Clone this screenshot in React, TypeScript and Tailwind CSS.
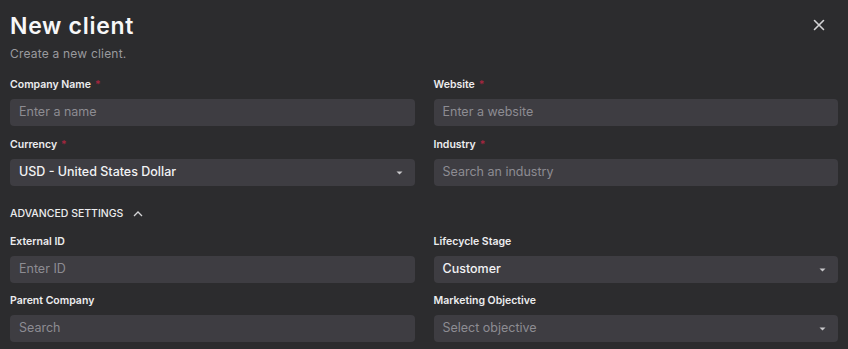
import React from "react";

const font = { fontFamily: "Inter, 'Noto Sans', sans-serif" };

function Label({ text, required }: { text: string; required?: boolean }) {
  return (
    <div className="h-[14px] text-[10.5px] leading-[14px] font-semibold text-[#ececee] flex items-center">
      <span>{text}</span>
      {required && <span className="ml-[4px] text-[#a3263f]">*</span>}
    </div>
  );
}

function Caret() {
  return (
    <svg width="7" height="4" viewBox="0 0 7 4" className="shrink-0">
      <path d="M0.5 0.5 L6.5 0.5 L3.5 3.5 Z" fill="#c9c9cc" />
    </svg>
  );
}

function Field({
  label,
  required,
  value,
  placeholder,
  select,
}: {
  label: string;
  required?: boolean;
  value?: string;
  placeholder?: string;
  select?: boolean;
}) {
  return (
    <div className="flex flex-col">
      <Label text={label} required={required} />
      <div className="mt-[7px] h-[27px] rounded-[4px] bg-[#3e3d42] flex items-center justify-between pl-[9px] pr-[12px]">
        {value ? (
          <span className="text-[12.5px] font-medium text-[#f2f2f4]">{value}</span>
        ) : (
          <span className="text-[12.5px] text-[#8d8c92]">{placeholder}</span>
        )}
        {select && <Caret />}
      </div>
    </div>
  );
}

export default function App() {
  return (
    <div style={font} className="w-[848px] h-[349px] bg-[#2c2c2e] overflow-hidden px-[10px] pt-[12px]">
      <div className="flex items-start justify-between">
        <div>
          <div className="text-[23px] leading-[28px] font-semibold tracking-[0.7px] text-[#f7f7f8]">New client</div>
          <div className="mt-[6px] text-[12px] leading-[16px] tracking-[0.2px] text-[#9a9a9e]">Create a new client.</div>
        </div>
        <svg width="12" height="12" viewBox="0 0 12 12" className="mt-[7px] mr-[13px]">
          <path d="M1.5 1.5 L10.5 10.5 M10.5 1.5 L1.5 10.5" stroke="#d4d4d6" strokeWidth="1.6" strokeLinecap="round" />
        </svg>
      </div>
      <div className="mt-[16px] grid grid-cols-2 gap-x-[19px] gap-y-[12px]">
        <Field label="Company Name" required placeholder="Enter a name" />
        <Field label="Website" required placeholder="Enter a website" />
        <Field label="Currency" required value="USD - United States Dollar" select />
        <Field label="Industry" required placeholder="Search an industry" />
      </div>
      <div className="mt-[21px] h-[14px] flex items-center gap-[10px] text-[10.5px] font-medium text-[#ececee] uppercase">
        <span>Advanced Settings</span>
        <svg width="10" height="6" viewBox="0 0 10 6">
          <path d="M1 5 L5 1 L9 5" stroke="#d4d4d6" strokeWidth="1.3" fill="none" />
        </svg>
      </div>
      <div className="mt-[14px] grid grid-cols-2 gap-x-[19px] gap-y-[11px]">
        <Field label="External ID" placeholder="Enter ID" />
        <Field label="Lifecycle Stage" value="Customer" select />
        <Field label="Parent Company" placeholder="Search" />
        <Field label="Marketing Objective" placeholder="Select objective" select />
      </div>
    </div>
  );
}
